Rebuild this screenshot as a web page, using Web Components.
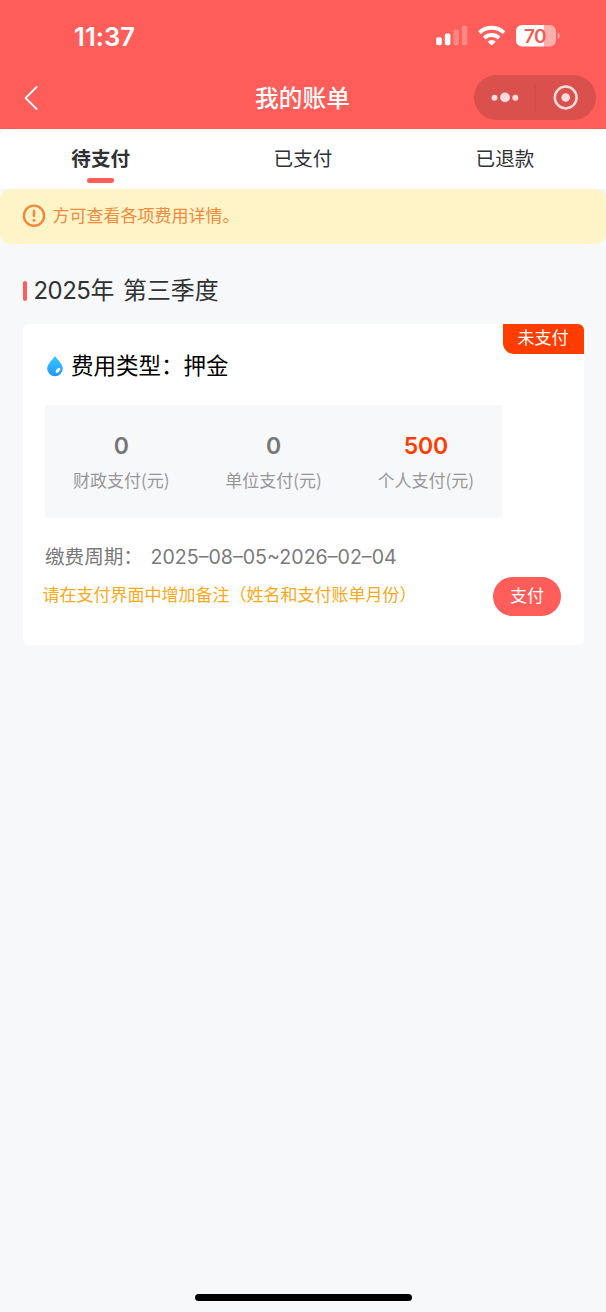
<!DOCTYPE html>
<html lang="zh-CN">
<head>
<meta charset="utf-8">
<title>我的账单</title>
<style>
body{margin:0;background:#f7f8fa;font-family:Inter,"Noto Sans CJK SC",sans-serif;}
</style>
</head>
<body>
<bill-page></bill-page>
<script>
function define(name, html) {
  customElements.define(name, class extends HTMLElement {
    constructor() {
      super();
      this.attachShadow({mode: 'open'}).innerHTML = html;
    }
  });
}

define('status-bar', `
<style>
:host{display:flex;height:67px;box-sizing:border-box;padding:3px 46px 0 74px;align-items:center;justify-content:space-between;color:#fff}
.time{font-size:25.5px;font-weight:600;line-height:30px;letter-spacing:.1px;margin-top:3px}
svg{display:block}
</style>
<span class="time">11:37</span>
<svg width="124" height="26" viewBox="0 0 124 26">
  <g fill="#fff" transform="translate(0 -.3)">
    <rect x="0.2" y="15.6" width="5.6" height="7.9" rx="1.6"/>
    <rect x="8.8" y="11.9" width="5.6" height="11.6" rx="1.6"/>
    <g opacity=".26"><rect x="17.5" y="8" width="5.4" height="15.5" rx="1.6"/><rect x="25.9" y="4" width="5.4" height="19.5" rx="1.6"/></g>
  </g>
  <g fill="none" stroke="#fff" stroke-width="3.9">
    <path d="M43.4 10.6a18.2 18.2 0 0 1 24.6 0"/>
    <path d="M48.3 16a10.8 10.8 0 0 1 14.8 0"/>
  </g>
  <path fill="#fff" d="M51.6 19.6a6 6 0 0 1 8.2 0l-3.4 3.4q-.7.7-1.4 0z"/>
  <clipPath id="b"><rect x="80" y="3" width="40" height="21.5" rx="6"/></clipPath>
  <g clip-path="url(#b)"><rect x="80" y="3" width="28" height="22" fill="#fff"/><rect x="108" y="3" width="12" height="22" fill="#fff" opacity=".5"/></g>
  <path d="M121.7 10.5c2.6 1.1 2.6 5.5 0 6.6z" fill="#fff" opacity=".5"/>
  <text x="99" y="20.7" text-anchor="middle" font-family="Inter,sans-serif" font-size="19" font-weight="600" fill="#f05c57" letter-spacing="-.6">70</text>
</svg>`);

define('nav-bar', `
<style>
:host{display:grid;grid-template-columns:1fr auto 1fr;height:62px;align-items:center;color:#fff;padding:0 10px 0 22.5px}
.capsule{justify-self:end;width:122px;height:45px;border-radius:23px;background:#d9504c;margin-top:-1px}
svg{display:block}
.title{font-size:23.7px;font-weight:500;line-height:34px;margin:2px 0 0 -13.5px}
</style>
<svg width="16" height="26" viewBox="0 0 16 26"><path d="M13.6 2 2.6 13l11 11" fill="none" stroke="#fff" stroke-width="1.8" stroke-linecap="round" stroke-linejoin="round"/></svg>
<span class="title"><slot></slot></span>
<div class="capsule"><svg width="122" height="45" viewBox="0 0 122 45">
  <g fill="#f9dcdb"><circle cx="20.5" cy="22.7" r="3"/><circle cx="31" cy="22.4" r="4.9"/><circle cx="41.3" cy="22.7" r="3"/><circle cx="91.7" cy="22.5" r="4.3"/></g>
  <circle cx="91.7" cy="22.5" r="10.9" fill="none" stroke="#f9dcdb" stroke-width="2.5"/>
  <path d="M61.2 8.5v28" stroke="#d04b48"/>
</svg></div>`);

define('tab-item', `
<style>
:host{flex:1;display:flex;flex-direction:column;align-items:center;font-size:19.6px;line-height:30px;color:#303133;padding-top:15px}
:host([active]){font-weight:700}
i{width:27px;height:4.5px;border-radius:2.3px;margin-top:4px}
:host([active]) span{margin-left:-.5px}
:host([active]) i{background:#ff5d59;margin-left:-.5px}
</style><span><slot></slot></span><i></i>`);

define('tab-bar', `
<style>:host{display:flex;height:59.5px;background:#fff;border-radius:8px 8px 0 0}</style><slot></slot>`);

define('notice-bar', `
<style>
:host{display:flex;align-items:center;gap:6.5px;height:55px;padding-left:22px;border-radius:11px;background:#fef4c8;color:#f08a3c;font-size:17px;line-height:24px}
span{margin-top:-1.5px}
</style>
<svg width="24" height="24" viewBox="0 0 24 24"><circle cx="12" cy="11.7" r="10.1" fill="none" stroke="#f08a3c" stroke-width="2.4"/><path d="M12 6.8v5.3" stroke="#f08a3c" stroke-width="2.5" stroke-linecap="round"/><circle cx="12" cy="16.4" r="1.45" fill="#f08a3c"/></svg>
<span><slot></slot></span>`);

define('section-title', `
<style>
:host{display:flex;align-items:center;gap:6.5px;height:36px;padding:29px 22.5px 15.5px;color:#303133;font-size:23.9px;line-height:36px;white-space:pre}
i{width:4.5px;height:20px;border-radius:2px;background:#ff5d59}
.year{letter-spacing:-.45px}
.rest{word-spacing:2px}
</style><i></i><span><span class="year"><slot name="year"></slot></span><span class="rest"><slot></slot></span></span>`);

define('stat-cell', `
<style>
:host{flex:1;text-align:center;color:#979797;font-size:17px}
b{display:block;color:#777;font-size:23px;line-height:30px;font-weight:600;letter-spacing:-.3px}
:host([strong]) b{color:#ff3d00}
span{display:block;line-height:24px;margin-top:7px;font-family:"Noto Sans CJK SC",sans-serif}
</style><b><slot name="value"></slot></b><span><slot></slot></span>`);

define('bill-card', `
<style>
:host{display:block;position:relative;box-sizing:border-box;height:320.5px;margin:0 22.5px;padding:25px 22.5px 0;border-radius:6px;background:#fff}
.badge{position:absolute;right:0;top:0;width:81px;height:30px;line-height:28px;background:#ff3d00;color:#fff;font-size:17px;text-align:center;border-radius:0 6px 0 11px}
.type{display:flex;align-items:center;gap:7.5px;font-size:22.5px;line-height:34px;color:#000;padding-left:.5px}
.stats{display:flex;width:457px;box-sizing:border-box;height:113px;margin-top:22px;padding-top:26px;background:#f7f8fa}
.period{display:flex;font-size:19.6px;line-height:30px;color:#7a7a7a;margin-top:24px}
.label{width:105.5px}
.foot{display:flex;justify-content:space-between;margin-left:-2.5px;height:40px;margin-top:4.5px}
.note{font-size:17px;line-height:25px;color:#faa91a;margin-top:6px;white-space:nowrap}
button{all:unset;width:68px;height:39.5px;border-radius:20px;background:#ff5d59;color:#fff;text-align:center;font-size:17px;line-height:39px}
</style>
<div class="badge">未支付</div>
<div class="type"><svg width="18" height="22" viewBox="0 0 18 22"><defs><linearGradient id="g" x2="0" y2="1"><stop stop-color="#39cafc"/><stop offset="1" stop-color="#2496ff"/></linearGradient></defs><path d="M9 1C11.2 4.2 16.8 9 16.8 13.5A7.8 7.8 0 0 1 1.2 13.5C1.2 9 6.8 4.2 9 1Z" fill="url(#g)"/><ellipse cx="12" cy="15.3" rx="1.6" ry="3" transform="rotate(38 12 15.3)" fill="#fff"/></svg><span>费用类型：押金</span></div>
<div class="stats">
<stat-cell><span slot="value">0</span>财政支付(元)</stat-cell>
<stat-cell><span slot="value">0</span>单位支付(元)</stat-cell>
<stat-cell strong><span slot="value">500</span>个人支付(元)</stat-cell>
</div>
<div class="period"><span class="label">缴费周期：</span><span class="date">2025–08–05~2026–02–04</span></div>
<div class="foot"><span class="note">请在支付界面中增加备注（姓名和支付账单月份）</span><button>支付</button></div>`);

define('bill-page', `
<style>
:host{display:flex;flex-direction:column;height:1312px;font-family:Inter,"Noto Sans CJK SC",sans-serif}
notice-bar{font-family:"Noto Sans CJK SC",sans-serif}
header{background:#ff5d59}
.home{width:217px;height:7.5px;border-radius:4px;background:#000;margin:auto auto 11px}
</style>
<header><status-bar></status-bar><nav-bar>我的账单</nav-bar></header>
<tab-bar><tab-item active>待支付</tab-item><tab-item>已支付</tab-item><tab-item>已退款</tab-item></tab-bar>
<notice-bar>方可查看各项费用详情。</notice-bar>
<section-title><span slot="year">2025</span>年 第三季度</section-title>
<bill-card></bill-card>
<div class="home"></div>`);
</script>
</body>
</html>
